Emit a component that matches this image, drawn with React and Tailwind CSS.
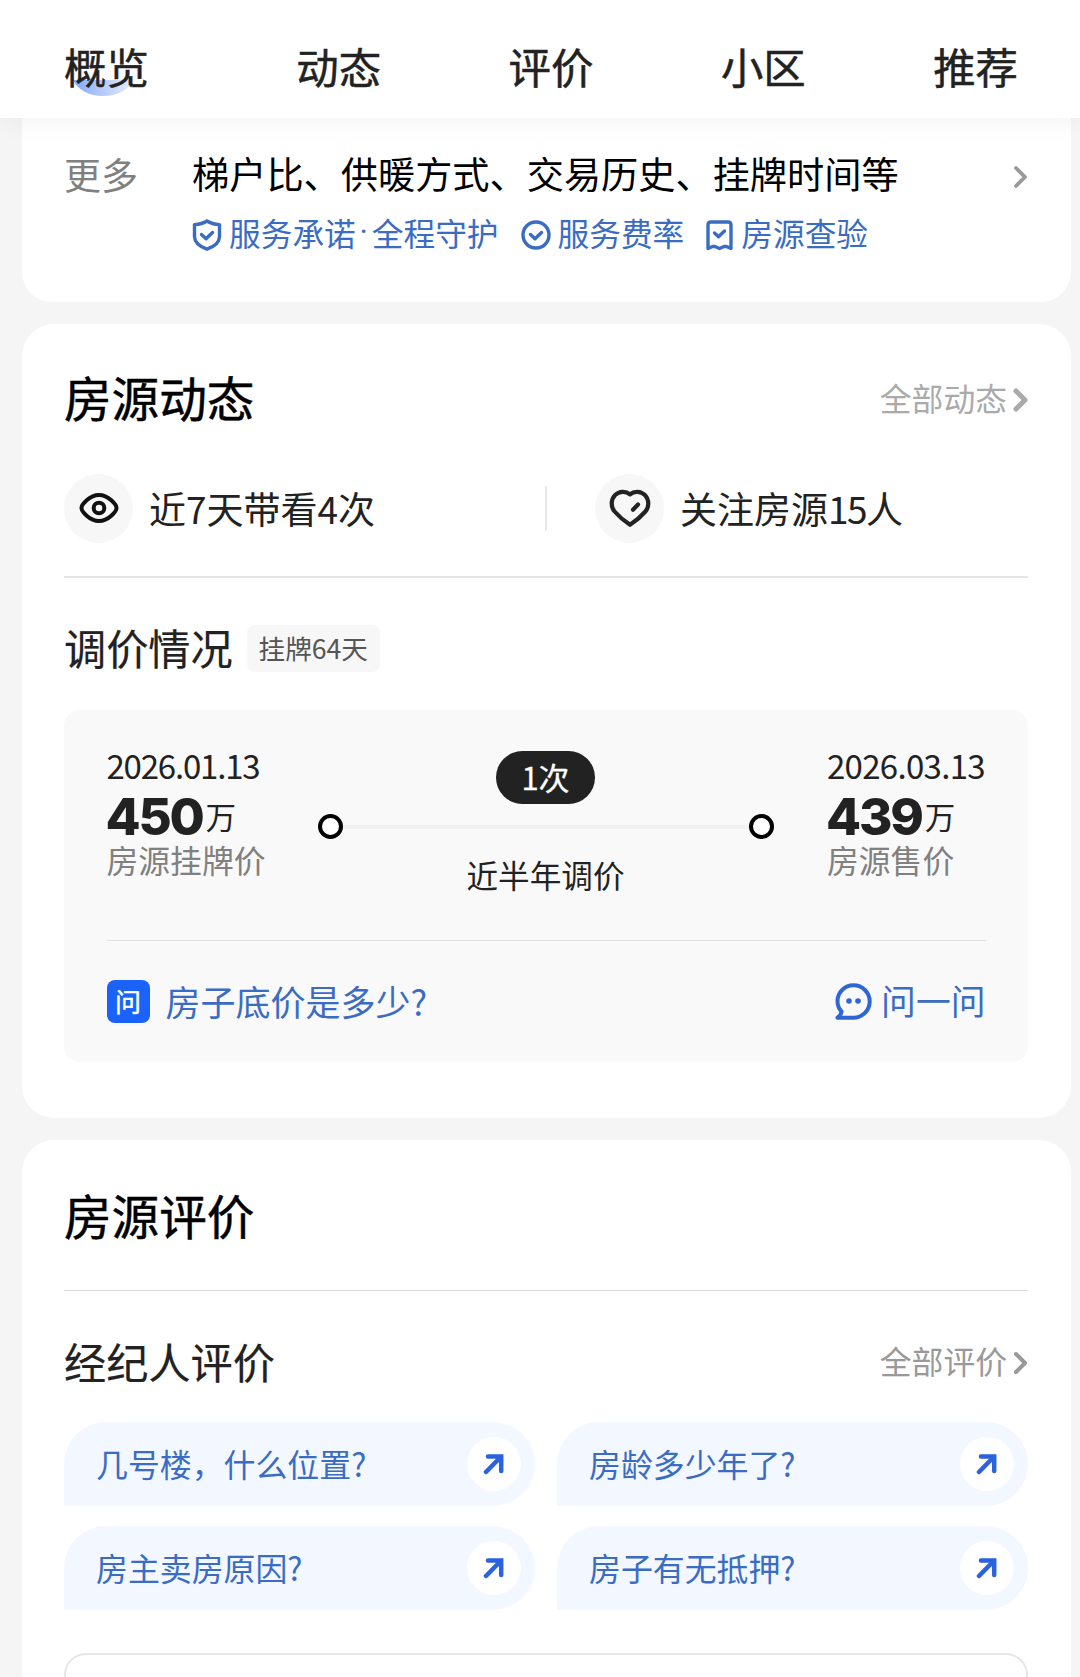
import React, { useState } from "react";

const TABS = ["概览", "动态", "评价", "小区", "推荐"];

const QUESTIONS = [
  "几号楼，什么位置?",
  "房龄多少年了?",
  "房主卖房原因?",
  "房子有无抵押?",
];

const ChevronIcon = ({ className, strokeWidth = 4 }) => (
  <svg className={`relative top-0.5 ${className || ""}`} width="15" height="24" viewBox="0 0 15 24" fill="none">
    <path
      d="M3 3L12 12L3 21"
      stroke="currentColor"
      strokeWidth={strokeWidth}
      strokeLinecap="round"
      strokeLinejoin="round"
    />
  </svg>
);

const ShieldIcon = () => (
  <svg width="30" height="32" viewBox="0 0 30 32" fill="none" stroke="currentColor" strokeWidth="3.4" strokeLinejoin="round">
    <path d="M15 2C11.5 4.3 7 5.4 2.5 5.6V17.5C2.5 23.5 8 27.6 15 30.2C22 27.6 27.5 23.5 27.5 17.5V5.6C23 5.4 18.5 4.3 15 2Z" />
    <path d="M9.5 15.5L14 19.8L20.5 13.5" strokeLinecap="round" />
  </svg>
);

const CircleCheckIcon = () => (
  <svg width="30" height="32" viewBox="0 0 30 32" fill="none" stroke="currentColor" strokeWidth="3.4">
    <circle cx="15" cy="16" r="13" />
    <path d="M9.5 15.5L14 19.8L20.5 13.5" strokeLinecap="round" strokeLinejoin="round" />
  </svg>
);

const BookmarkCheckIcon = () => (
  <svg width="28" height="32" viewBox="0 0 28 32" fill="none" stroke="currentColor" strokeWidth="3.4" strokeLinejoin="round">
    <path d="M2 6Q2 3 5 3H22Q25 3 25 6V29.5L20.5 27.5H18L13.5 29.5L9 27.5H6.5L2 29.5Z" />
    <path d="M8.5 14L12.5 17.8L18.5 12" strokeLinecap="round" />
  </svg>
);

const EyeIcon = () => (
  <svg width="40" height="32" viewBox="0 0 40 32" fill="none" stroke="#111" strokeWidth="4">
    <path d="M2.5 16C2.5 12.8 10.5 3 20 3C29.5 3 37.5 12.8 37.5 16C37.5 19.2 29.5 29 20 29C10.5 29 2.5 19.2 2.5 16Z" />
    <circle cx="20" cy="16" r="5.3" />
  </svg>
);

const HeartIcon = () => (
  <svg width="42" height="38" viewBox="0 0 42 38" fill="none" stroke="#222" strokeWidth="4.2" strokeLinecap="round" strokeLinejoin="round">
    <path d="M21 5.3C17 1.8 10 1.8 6 6.2C1.8 10.8 1.6 17.8 5.6 22.5C9.5 27 16 32.5 21 35.8C26 32.5 32.5 27 36.4 22.5C40.4 17.8 40.2 10.8 36 6.2C32 1.8 25 1.8 21 5.3Z" />
    <path d="M24 20.7L29 15.5" />
  </svg>
);

const ChatIcon = () => (
  <svg width="37" height="37" viewBox="0 0 37 37" fill="none">
    <path
      d="M18.5 2.3C9.5 2.3 2.5 9.5 2.5 18.2C2.5 22.2 4.2 26 6.6 28.7C6.3 31 4.8 33 2.5 34.7H18.5C27.5 34.7 34.7 27.4 34.7 18.5C34.7 9.5 27.5 2.3 18.5 2.3Z"
      stroke="#2f66d4"
      strokeWidth="4"
      strokeLinejoin="round"
    />
    <circle cx="14" cy="18" r="2.8" fill="#2f66d4" />
    <circle cx="23" cy="18" r="2.8" fill="#2f66d4" />
  </svg>
);

const ArrowIcon = () => (
  <svg width="22" height="22" viewBox="0 0 22 22" fill="none" stroke="#2a62e0" strokeWidth="4.5" strokeLinecap="round">
    <path d="M5 3.5H18.2V18" />
    <path d="M17.5 4.2L3 19" />
  </svg>
);

const Tag = ({ icon, className, children }) => (
  <div className={`flex items-center gap-[7px] text-[#3a6cc4] ${className || ""}`}>
    {icon}
    <span className="relative -top-0.5 flex text-[31.7px] leading-none">{children}</span>
  </div>
);

const PriceBlock = ({ date, price, label, className, dateClass }) => (
  <div className={`flex flex-col items-start ${className}`}>
    <span className={`-mt-0.5 h-[44px] text-[33px] leading-[44px] text-[#222] ${dateClass}`}>{date}</span>
    <div className="mt-1 flex h-[52px] items-baseline text-[#222]">
      <span className="-ml-px font-['Inter',sans-serif] text-[51px] leading-[52px] font-extrabold tracking-[-2.2px]">
        {price}
      </span>
      <span className="relative -top-1.5 ml-[3px] text-[30.5px] leading-[44px]">万</span>
    </div>
    <span className="-mt-1 h-[40px] text-[31.8px] leading-[40px] text-[#808080]">{label}</span>
  </div>
);

const App = () => {
  const [activeTab, setActiveTab] = useState(0);

  return (
    <div className="h-[1677px] w-[1080px] overflow-hidden bg-[#f5f5f5] font-['Noto_Sans_CJK_SC',sans-serif] text-[#222]">
      {/* Tabs */}
      <nav className="relative z-10 flex h-[118px] items-center justify-between bg-white pt-3.5 pr-[62px] pl-16 shadow-[0_4px_24px_rgba(0,0,0,0.05)]">
        {TABS.map((tab, index) => (
          <button
            key={tab}
            onClick={() => setActiveTab(index)}
            className={`relative text-[42.4px] leading-[48px] [-webkit-text-stroke:0.5px_#222] ${index === 0 ? "mr-5" : ""}`}
          >
            {activeTab === index && (
              <svg className="absolute top-[35px] left-[9px]" width="62" height="20" viewBox="0 0 62 20">
                <defs>
                  <linearGradient id="tabGlow" x1="0" y1="0" x2="1" y2="0">
                    <stop offset="0" stopColor="#86a8f6" />
                    <stop offset="1" stopColor="#e6eeff" />
                  </linearGradient>
                </defs>
                <path d="M0 3C5 13 16 19 30 19C44 19 56 13 60 3Z" fill="url(#tabGlow)" />
              </svg>
            )}
            <span className="relative">{tab}</span>
          </button>
        ))}
      </nav>

      <main className="flex flex-col gap-[22px] pr-[9.5px] pl-[21.5px]">
        {/* More info */}
        <section className="h-[184px] rounded-b-[30px] bg-white px-[42.5px] pt-[32px]">
          <div className="flex h-[48px] items-center">
            <span className="w-[128px] text-[37px] leading-none text-[#808080]">更多</span>
            <span className="text-[37.2px] leading-none text-black">
              梯户比、供暖方式、交易历史、挂牌时间等
            </span>
            <ChevronIcon className="mt-0.5 ml-auto text-[#999]" strokeWidth={3.8} />
          </div>
          <div className="mt-[21px] flex h-8 items-center pl-[128px]">
            <Tag icon={<ShieldIcon />}>
              服务承诺
              <span className="w-4 text-center font-['Roboto',sans-serif]">·</span>
              全程守护
            </Tag>
            <Tag icon={<CircleCheckIcon />} className="ml-[22px]">服务费率</Tag>
            <Tag icon={<BookmarkCheckIcon />} className="ml-[22px]">房源查验</Tag>
          </div>
        </section>

        {/* Activity */}
        <section className="h-[794px] rounded-[32px] bg-white px-[42.5px] pt-[44px]">
          <div className="flex h-[60px] items-center justify-between">
            <h2 className="relative -top-px text-[47.6px] leading-none text-black [-webkit-text-stroke:0.5px_#000]">房源动态</h2>
            <div className="flex items-center gap-[6px] text-[#aaa]">
              <span className="text-[31.8px] leading-none">全部动态</span>
              <ChevronIcon strokeWidth={5} />
            </div>
          </div>

          <div className="mt-[45px] flex h-[70px] items-center">
            <div className="flex w-[481px] items-center">
              <div className="flex h-[69px] w-[69px] items-center justify-center rounded-full bg-[#f7f7f7]">
                <EyeIcon />
              </div>
              <span className="ml-4 text-[37px] leading-none">近7天带看4次</span>
            </div>
            <div className="h-[45px] w-0.5 bg-[#e8e8e8]" />
            <div className="ml-[48px] flex items-center">
              <div className="flex h-[69px] w-[69px] items-center justify-center rounded-full bg-[#f7f7f7]">
                <HeartIcon />
              </div>
              <span className="ml-4 text-[37px] leading-none">
                关注房源<span className="tracking-[-1.5px]">15</span>人
              </span>
            </div>
          </div>

          <div className="mt-[33px] h-0.5 bg-[#e6e6e6]" />

          <div className="mt-[47px] flex h-[47px] items-center gap-[14px]">
            <h3 className="relative -top-px text-[42.2px] leading-none [-webkit-text-stroke:0.2px_#222]">调价情况</h3>
            <span className="flex h-[47px] w-[133px] items-center justify-center rounded-lg bg-[#f7f7f7] pb-px text-[26.6px] leading-none text-[#555]">
              挂牌64天
            </span>
          </div>

          <div className="mt-[38px] h-[352px] rounded-2xl bg-[#f9f9f9] px-[42.5px] pt-[35px]">
            <div className="flex h-[195px]">
              <PriceBlock
                date="2026.01.13"
                price="450"
                label="房源挂牌价"
                className="w-[211px]"
                dateClass="tracking-[-1.2px]"
              />
              <div className="flex w-[456px] flex-col items-center">
                <span className="mt-1.5 flex h-[53px] w-[99px] items-center justify-center rounded-full bg-[#222] pb-[3px] text-[31px] leading-none text-white [-webkit-text-stroke:0.3px_#fff]">
                  1次
                </span>
                <div className="mt-[10px] flex w-full items-center">
                  <span className="h-[25px] w-[25px] rounded-full border-4 border-black bg-white" />
                  <span className="h-1 flex-1 bg-[#f1f1f1]" />
                  <span className="h-[25px] w-[25px] rounded-full border-4 border-black bg-white" />
                </div>
                <span className="mt-[20px] text-[31.6px] leading-none">近半年调价</span>
              </div>
              <PriceBlock
                date="2026.03.13"
                price="439"
                label="房源售价"
                className="ml-[53.5px]"
                dateClass="tracking-[-0.7px]"
              />
            </div>

            <div className="h-px bg-[#e0e0e0]" />

            <div className="mt-[39px] flex h-[43px] items-center text-[#3a6cc4]">
              <span className="flex h-[43px] w-[43px] items-center justify-center rounded-lg bg-[#1a62fa] pb-0.5 text-[26px] leading-none text-white [-webkit-text-stroke:0.5px_#fff]">
                问
              </span>
              <span className="relative -top-px ml-4 text-[35px] leading-none">房子底价是多少?</span>
              <div className="ml-auto flex items-center gap-[9px]">
                <ChatIcon />
                <span className="relative -top-px text-[34.8px] leading-none">问一问</span>
              </div>
            </div>
          </div>
        </section>

        {/* Reviews */}
        <section className="h-[560px] rounded-t-[32px] bg-white px-[42.5px] pt-[46px]">
          <h2 className="relative -top-px h-[60px] text-[47.6px] leading-[60px] text-black [-webkit-text-stroke:0.5px_#000]">房源评价</h2>
          <div className="mt-[44px] h-px bg-[#dedede]" />

          <div className="mt-[44px] flex h-[54px] items-center justify-between">
            <h3 className="relative -top-px text-[42.2px] leading-none [-webkit-text-stroke:0.2px_#222]">经纪人评价</h3>
            <div className="flex items-center gap-[6px] text-[#999]">
              <span className="relative -top-px text-[31.8px] leading-none">全部评价</span>
              <ChevronIcon className="-mt-0.5" strokeWidth={4} />
            </div>
          </div>

          <div className="mt-[33px] grid grid-cols-2 gap-x-[22px] gap-y-[20px]">
            {QUESTIONS.map((question) => (
              <button
                key={question}
                className="flex h-[84px] items-center justify-between rounded-[42px] rounded-bl-none bg-[#f3f7ff] pr-[14px] pl-8 text-[#3a6cc4]"
              >
                <span className="text-[31.9px] leading-none">{question}</span>
                <span className="flex h-[54px] w-[54px] items-center justify-center rounded-full bg-white">
                  <ArrowIcon />
                </span>
              </button>
            ))}
          </div>

          <div className="mt-[43px] h-[80px] rounded-t-[22px] border-2 border-b-0 border-[#e6e6e6]" />
        </section>
      </main>
    </div>
  );
};

export default App;
